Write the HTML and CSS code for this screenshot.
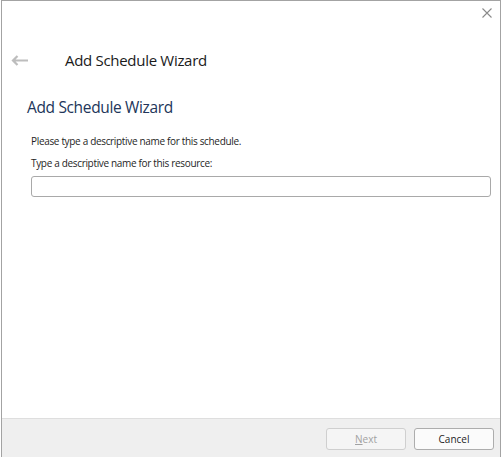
FILE: index.html
```html
<!DOCTYPE html>
<html>
<head>
  <title>Add Schedule Wizard</title>
  <link rel="stylesheet" href="styles.css">
</head>
<body>
  <!-- Dialog window -->
  <div class="dialog">
    <div class="titlebar">
      <svg class="close" width="10" height="10" viewBox="0 0 10 10">
        <path d="M0.5 0.5 L9.5 9.5 M9.5 0.5 L0.5 9.5" stroke="#8a8a8a" stroke-width="1.1" fill="none"/>
      </svg>
    </div>
    <!-- Back arrow and wizard title -->
    <div class="header">
      <svg class="back" width="17" height="11" viewBox="0 0 17 11">
        <path d="M17 5.5 H2 M6.5 1 L2 5.5 L6.5 10" stroke="#bdbdbd" stroke-width="2.2" fill="none"/>
      </svg>
      <span class="title">Add Schedule Wizard</span>
    </div>
    <!-- Page content -->
    <div class="content">
      <h2>Add Schedule Wizard</h2>
      <p class="hint">Please type a descriptive name for this schedule.</p>
      <label class="field-label" for="schedName">Type a descriptive name for this resource:</label>
      <input type="text" id="schedName" class="text-input">
    </div>
    <!-- Footer buttons -->
    <div class="footer">
      <button class="btn" disabled><u>N</u>ext</button>
      <button class="btn btn-cancel">Cancel</button>
    </div>
  </div>
</body>
</html>
```

FILE: styles.css
```css
body {
  margin: 0;
  padding: 0;
  background: #fff;
  font-family: 'Open Sans', 'Noto Sans', sans-serif;
  color: #1e1e1e;
  overflow: hidden;
}
.dialog {
  box-sizing: border-box;
  margin-left: 1px;
  width: 500px;
  height: 457px;
  border: 1px solid #a3a3a3;
  border-bottom: none;
  display: flex;
  flex-direction: column;
  background: #fff;
}
.titlebar {
  display: flex;
  justify-content: flex-end;
  padding: 7px 8px 0 0;
}
.close {
  display: block;
}
.header {
  display: flex;
  align-items: center;
  height: 24px;
  margin-top: 30px;
  padding-left: 9px;
}
.back {
  display: block;
}
.title {
  margin-left: 37px;
  font-size: 15px;
  letter-spacing: -0.3px;
  color: #1a1a1a;
}
.content {
  padding: 0 8px 0 29px;
}
h2 {
  margin: 24px 0 0 -4px;
  font-size: 15.5px;
  font-weight: normal;
  line-height: 22px;
  letter-spacing: -0.35px;
  color: #22365a; /* Navy page heading */
}
.hint {
  margin: 16px 0 0;
  font-size: 10px;
  line-height: 14px;
  letter-spacing: -0.33px;
}
.field-label {
  display: block;
  margin-top: 8px;
  font-size: 10px;
  line-height: 14px;
  letter-spacing: -0.33px;
}
.text-input {
  box-sizing: border-box;
  display: block;
  width: 460px;
  height: 21px;
  margin-top: 6px;
  border: 1px solid #a9a9a9;
  border-radius: 3px;
  background: #fff;
}
.footer {
  margin-top: auto;
  height: 39px;
  border-top: 1px solid #dedede;
  background: #efefef;
  display: flex;
  justify-content: flex-end;
  gap: 8px;
  padding: 9px 6px 0 0;
  box-sizing: border-box;
}
.btn {
  width: 80px;
  height: 22px;
  border: 1px solid #cfcfcf;
  border-radius: 3px;
  background: #f5f5f5;
  color: #a2a2a2;
  font-family: 'Open Sans', 'Noto Sans', sans-serif;
  font-size: 10px;
  padding: 0;
}
.btn-cancel {
  border-color: #adadad;
  background: #fbfbfb;
  color: #1e1e1e;
}
```
